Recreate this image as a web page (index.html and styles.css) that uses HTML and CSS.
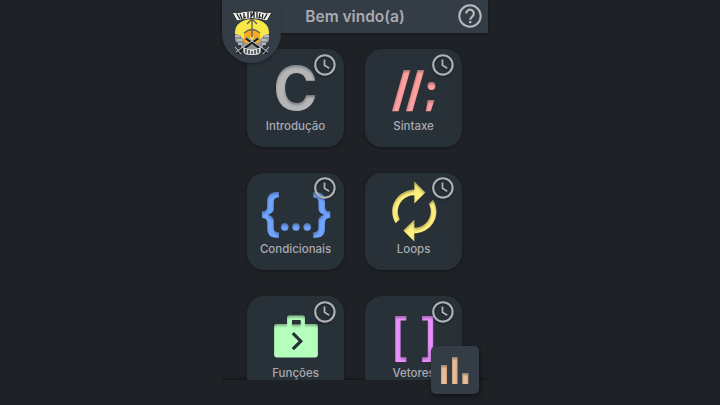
FILE: index.html
```html
<!DOCTYPE html>
<html lang="pt-BR">
<head>
<meta charset="utf-8">
<title>Bem vindo(a)</title>
<link rel="stylesheet" href="styles.css">
</head>
<body>
<svg class="defs" width="0" height="0" aria-hidden="true">
  <defs>
    <filter id="inner" x="-10%" y="-10%" width="120%" height="125%" color-interpolation-filters="sRGB">
      <feOffset in="SourceAlpha" dx="0" dy="1.5" result="o"/>
      <feGaussianBlur in="o" stdDeviation="1.1" result="b"/>
      <feComposite in="SourceAlpha" in2="b" operator="out" result="i"/>
      <feFlood flood-color="#1b2026" flood-opacity="0.35"/>
      <feComposite in2="i" operator="in" result="s"/>
      <feMerge><feMergeNode in="SourceGraphic"/><feMergeNode in="s"/></feMerge>
    </filter>
    <symbol id="clock" viewBox="0 0 24 24">
      <circle cx="12" cy="12" r="9" fill="none" stroke="currentColor" stroke-width="2"/>
      <path d="M11.6 7v5.4l4.4 2.7" fill="none" stroke="currentColor" stroke-width="1.7"/>
    </symbol>
  </defs>
</svg>
<main class="app">
  <header class="topbar">
    <div class="crest">
      <svg width="40" height="48" viewBox="0 0 40 48">
        <g fill="#8e9294"><rect x="3" y="24" width="34" height="10" rx="4"/><path d="M9 30h22v10l-5 6H14l-5-6z"/></g>
        <path d="M3 25q-1-10 10-14l5-2 2 4 2-4 5 2q11 4 10 14l-5 1-3 4H11l-3-4z" fill="#f7e848"/>
        <path d="M12 25q7-11 16 0v8l-4 2h-8l-4-2z" fill="#f5ab1d"/>
        <path d="M18 28h4v8h-4z" fill="#e9dc55"/>
        <path d="M20 8v20M15 15l5-5 5 5M12 24q8-7 16 0" fill="none" stroke="#66635a" stroke-width="1.4"/>
        <path d="M5 44L26 29M35 44L14 29" stroke="#191b1d" stroke-width="2.800"/>
        <path d="M4 43L26 28M36 43L14 28M3 38l6 7M37 38l-6 7" stroke="#c8cbcc" stroke-width="1" fill="none"/>
        <path d="M3 27h5M32 27h5M5 31h6M29 31h6M6 35h4M30 35h4" stroke="#b4b8ba" stroke-width="2"/>
        <path d="M0 3l5 1q15-4 30 0l5-1-5 9-4-1q-11-3-22 0l-4 1z" fill="#eceeed" stroke="#222" stroke-width=".8"/>
        <path d="M5 5l3 5M8 5l2 5M12 4v5l2-1M16 3v6M19 3v5l3-5v6M25 3v6M28 4l-1 5 2-1M31 5l-1 5M35 5l-3 5" fill="none" stroke="#111" stroke-width="1.200"/>
        <path d="M11 38q9 5 18 0l-1 6q-8 4-16 0z" fill="#dfe1e1"/>
        <path d="M14 40v4M17 41v4M20 42v3M23 41v4M26 40v4" stroke="#111" stroke-width="1.200"/>
      </svg>
    </div>
    <h1 class="title">Bem vindo(a)</h1>
    <svg class="help" width="24" height="24" viewBox="0 0 24 24">
      <circle cx="12" cy="12" r="10.7" fill="none" stroke="currentColor" stroke-width="2"/>
      <path d="M8.2 9.6a3.8 3.8 0 1 1 6.3 2.8c-1.3 1.100-2.300 1.700-2.300 3.400" fill="none" stroke="currentColor" stroke-width="2.200"/>
      <rect x="11" y="17" width="2.400" height="2.200" fill="currentColor"/>
    </svg>
  </header>

  <section class="viewport">
    <div class="grid">
      <article class="card">
        <svg class="icon gray" viewBox="0 0 98 66"><g filter="url(#inner)"><text class="glyph" x="26.300" y="61" font-size="60" textLength="44.500" lengthAdjust="spacingAndGlyphs">C</text></g></svg>
        <span class="label">Introdução</span>
        <svg class="clock"><use href="#clock"/></svg>
      </article>
      <article class="card">
        <svg class="icon red" viewBox="0 0 98 66"><g filter="url(#inner)"><path d="M38.700 21h6.600L33.600 62.300H27zM52.600 21h6.600L47.500 62.300h-6.600zM62.800 51h6.600L65.800 62.300h-5z"/><circle cx="66.500" cy="37" r="3.900"/></g></svg>
        <span class="label">Sintaxe</span>
        <svg class="clock"><use href="#clock"/></svg>
      </article>
      <article class="card">
        <svg class="icon blue" viewBox="0 0 98 66"><g filter="url(#inner)"><text class="glyph" transform="translate(11.800 57.600) scale(1 1.050)" font-size="48">{</text><circle cx="37.700" cy="54" r="3.800"/><circle cx="49" cy="54" r="3.800"/><circle cx="60.200" cy="54" r="3.800"/><text class="glyph" transform="translate(64 57.600) scale(1 1.050)" font-size="48">}</text></g></svg>
        <span class="label">Condicionais</span>
        <svg class="clock"><use href="#clock"/></svg>
      </article>
      <article class="card">
        <svg class="icon yellow" viewBox="0 0 98 66"><g filter="url(#inner)"><path transform="translate(16.2 5.900) scale(2.76 2.72)" d="M12 6v3l4-4-4-4v3c-4.42 0-8 3.58-8 8 0 1.57.46 3.03 1.24 4.26L6.7 14.8c-.45-.83-.7-1.79-.7-2.8 0-3.31 2.69-6 6-6zm6.76 1.74L17.3 9.2c.44.84.7 1.79.7 2.8 0 3.31-2.69 6-6 6v-3l-4 4 4 4v-3c4.42 0 8-3.58 8-8 0-1.57-.46-3.03-1.24-4.26z"/></g></svg>
        <span class="label">Loops</span>
        <svg class="clock"><use href="#clock"/></svg>
      </article>
      <article class="card">
        <svg class="icon green" viewBox="0 0 98 66"><g filter="url(#inner)"><path fill-rule="evenodd" d="M29 28h11v-6q0-2.5 2.500-2.500h13q2.500 0 2.500 2.500v6h10q3 0 3 3v27.500q0 3-3 3H30q-3 0-3-3V31q0-3 3-3zM45 24v4.500h8.700V24z"/></g><path d="M45.8 37.200l8 8-8 8" fill="none" stroke="#283139" stroke-width="3.200"/></svg>
        <span class="label">Funções</span>
        <svg class="clock"><use href="#clock"/></svg>
      </article>
      <article class="card">
        <svg class="icon purple" viewBox="0 0 98 66"><g filter="url(#inner)"><path d="M30.200 20h11.100v4.600h-5.700v36.700h5.700v4.600H30.200zM68.200 20H57.100v4.600h5.700v36.700h-5.700v4.600h11.100z"/></g></svg>
        <span class="label">Vetores</span>
        <svg class="clock"><use href="#clock"/></svg>
      </article>
    </div>
  </section>

  <button class="stats" aria-label="Estatísticas">
    <svg width="48" height="48" viewBox="0 0 48 48"><g fill="#e9be98" filter="url(#inner)"><rect x="10" y="19" width="6" height="19"/><rect x="21" y="11" width="5.500" height="27"/><rect x="31.300" y="27" width="6" height="11"/></g></svg>
  </button>
</main>
</body>
</html>
```
FILE: styles.css
```css
* { box-sizing: border-box; }
body {
  margin: 0;
  height: 405px;
  overflow: hidden;
  background: #1e2226;
  font-family: Inter, "Open Sans", sans-serif;
  color: #a9aab2;
}
.defs { position: absolute; }
.app {
  position: relative;
  width: 266px;
  height: 405px;
  margin-left: 222px;
  display: flex;
  flex-direction: column;
}
.topbar {
  position: relative;
  z-index: 2;
  height: 33px;
  flex: none;
  display: flex;
  align-items: center;
  justify-content: center;
  background: #343d46;
  box-shadow: 0 1px 3px #0c0f1299;
}
.crest {
  position: absolute;
  left: 0;
  top: 0;
  width: 59px;
  height: 63px;
  padding: 9px 0 0 10px;
  background: #343d46;
  border-radius: 0 0 30px 30px;
  box-shadow: 0 2px 3px -1px #0c0f1299;
}
.title {
  margin: 0;
  font-size: 15.5px;
  font-weight: 600;
  line-height: 33px;
  white-space: nowrap;
}
.help {
  position: absolute;
  right: 6px;
  top: 4px;
  color: #b8b9bd;
}
.viewport {
  height: 347px;
  overflow: hidden;
  box-shadow: inset 0 -3px 3px -2px #0e1114;
}
.grid {
  display: grid;
  grid-template-columns: 97.500px 97.500px;
  grid-auto-rows: 97.500px;
  gap: 26px 20.500px;
  padding: 16.300px 0 0 24.800px;
}
.card {
  position: relative;
  display: flex;
  flex-direction: column;
  align-items: center;
  border-radius: 17px;
  background: #293138;
  box-shadow: 0 1px 3px #0d101399;
}
.icon { width: 98px; height: 66px; overflow: visible; flex: none; }
.glyph { font-family: Inter, sans-serif; font-weight: 700; line-height: 1; }
.label {
  margin-top: .3px;
  font-size: 11.500px;
  font-weight: 500;
  line-height: 20px;
  white-space: nowrap;
}
.clock {
  position: absolute;
  right: 6.400px;
  top: 2.700px;
  width: 25.800px;
  height: 25.800px;
  color: #b0b1b4;
  filter: drop-shadow(0 1px 1px #0d101399);
}
.gray { fill: #b5b5b8; }
.red { fill: #ff9f9f; }
.blue { fill: #70a5ff; }
.yellow { fill: #fff07c; }
.green { fill: #b5ffbd; }
.purple { fill: #ee91ff; }
.stats {
  position: absolute;
  z-index: 3;
  left: 209px;
  top: 346px;
  width: 48px;
  height: 48px;
  padding: 0;
  border: 0;
  border-radius: 5px;
  background: #343d46;
  box-shadow: 1px 2px 4px #0a0d10b3;
}
.stats svg { display: block; }
```
